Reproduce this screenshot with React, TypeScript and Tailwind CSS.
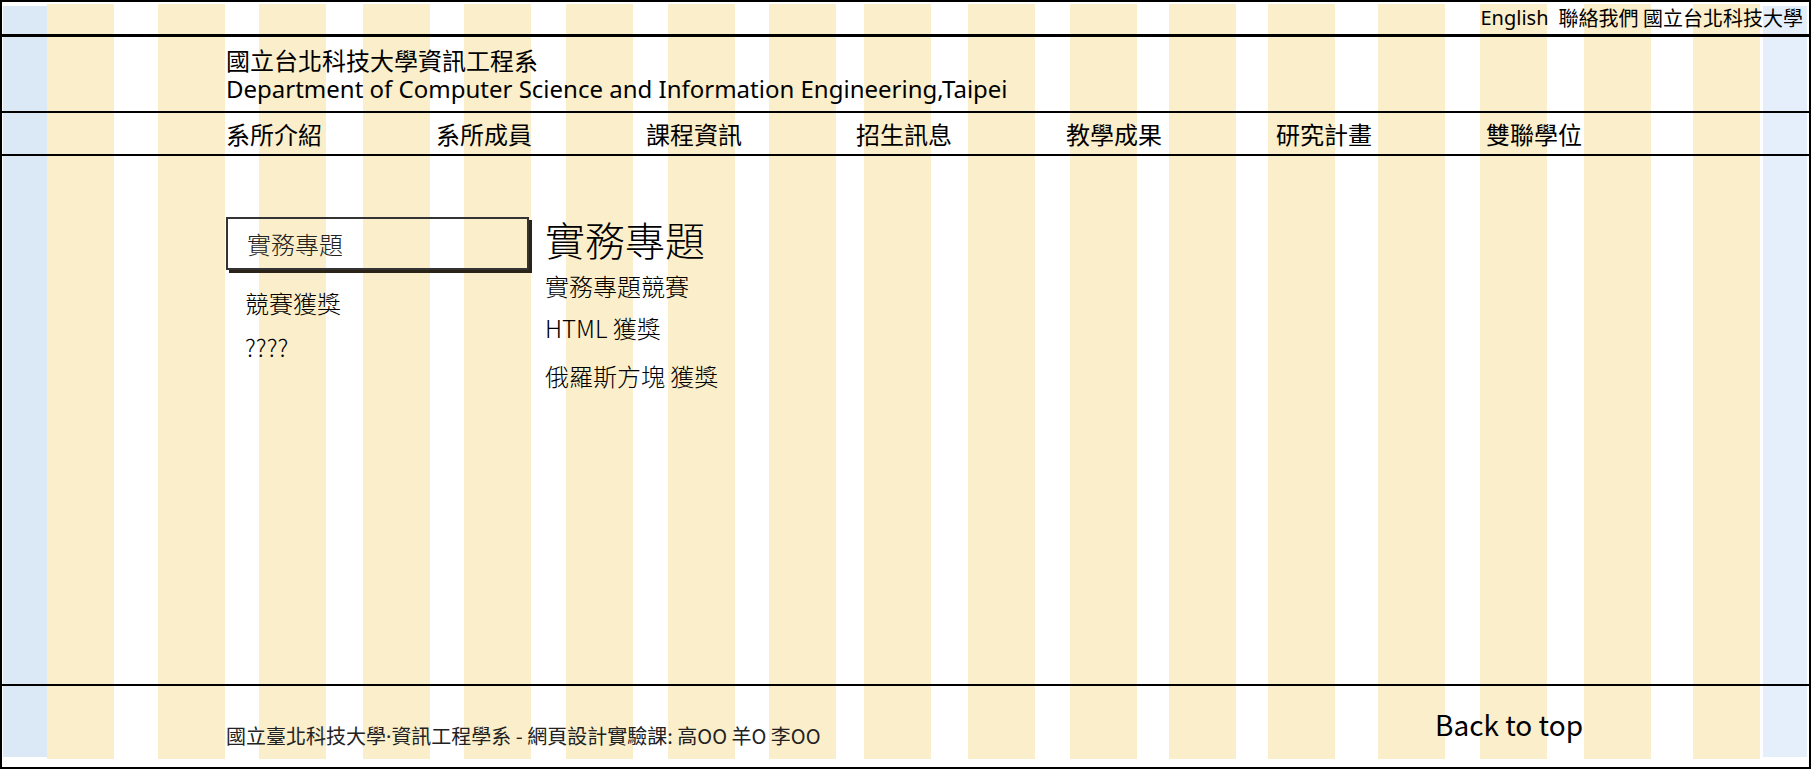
const columns = [47, 158, 259, 363, 464, 566, 668, 769, 864, 968, 1070, 1169, 1268, 1378, 1480, 1584, 1693];

const navItems = ["系所介紹", "系所成員", "課程資訊", "招生訊息", "教學成果", "研究計畫", "雙聯學位"];

function GridOverlay() {
  return (
    <div className="pointer-events-none absolute inset-0">
      <div className="absolute left-[1px] top-[4px] h-[751px] w-[45px] bg-[#dbe9f6]" />
      {columns.map((left) => (
        <div
          key={left}
          className="absolute top-[2px] h-[755px] w-[67px] bg-[#fbeecb]"
          style={{ left: left - 2 }}
        />
      ))}
      <div className="absolute right-[2px] top-[4px] h-[751px] w-[44px] bg-[#e5effb]" />
    </div>
  );
}

export default function App() {
  return (
    <div className="h-[769px] w-full overflow-hidden bg-white text-black font-['Noto_Sans','Noto_Sans_CJK_TC',sans-serif]">
      <div className="relative flex h-full flex-col border-2 border-black">
        <GridOverlay />

        <div className="relative flex h-[35px] items-center justify-end gap-[10px] border-b-[3px] border-black pr-[6px] text-[20px]">
          <span>English</span>
          <span className="font-['Noto_Sans_CJK_TC',sans-serif]">聯絡我們 國立台北科技大學</span>
        </div>

        <div className="relative flex h-[76px] flex-col justify-center border-b-2 border-black pl-[224px] leading-[29px]">
          <div className="text-[24px] font-['Noto_Sans_CJK_TC',sans-serif]">國立台北科技大學資訊工程系</div>
          <div className="text-[24px]">Department of Computer Science and Information Engineering,Taipei</div>
        </div>

        <nav className="relative flex h-[43px] items-center border-b-2 border-black pl-[224px] text-[24px] font-['Noto_Sans_CJK_TC',sans-serif]">
          {navItems.map((item) => (
            <a key={item} href="#" className="w-[210px] shrink-0">
              {item}
            </a>
          ))}
        </nav>

        <main className="relative flex flex-1 gap-[16px] pl-[224px] pt-[61px] font-['Noto_Sans_CJK_TC',sans-serif] font-light">
          <aside className="w-[303px] shrink-0">
            <div className="flex h-[53px] items-center border-2 border-[#333] pl-[19px] text-[24px] text-[#222] shadow-[3px_3px_0_#2b2416]">
              實務專題
            </div>
            <ul className="mt-[18px] flex flex-col gap-[14px] pl-[19px] text-[24px] leading-[30px]">
              <li>競賽獲獎</li>
              <li>????</li>
            </ul>
          </aside>
          <section className="flex flex-col">
            <h1 className="-mt-[2px] text-[40px] leading-[48px]">實務專題</h1>
            <ul className="mt-[8px] flex flex-col text-[24px] leading-[30px]">
              <li>實務專題競賽</li>
              <li className="mt-[12px]">HTML 獲獎</li>
              <li className="mt-[18px]">俄羅斯方塊 獲獎</li>
            </ul>
          </section>
        </main>

        <footer className="relative flex h-[83px] items-center justify-between border-t-2 border-black pl-[224px] pr-[226px] font-['Noto_Sans_CJK_TC',sans-serif]">
          <p className="mt-[20px] text-[20px] text-[#222]">
            國立臺北科技大學<span className="font-['Noto_Sans',sans-serif]">·</span>資訊工程學系 - 網頁設計實驗課: 高OO 羊O 李OO
          </p>
          <a href="#" className="-mt-[6px] text-[28px]">
            Back to top
          </a>
        </footer>
      </div>
    </div>
  );
}
